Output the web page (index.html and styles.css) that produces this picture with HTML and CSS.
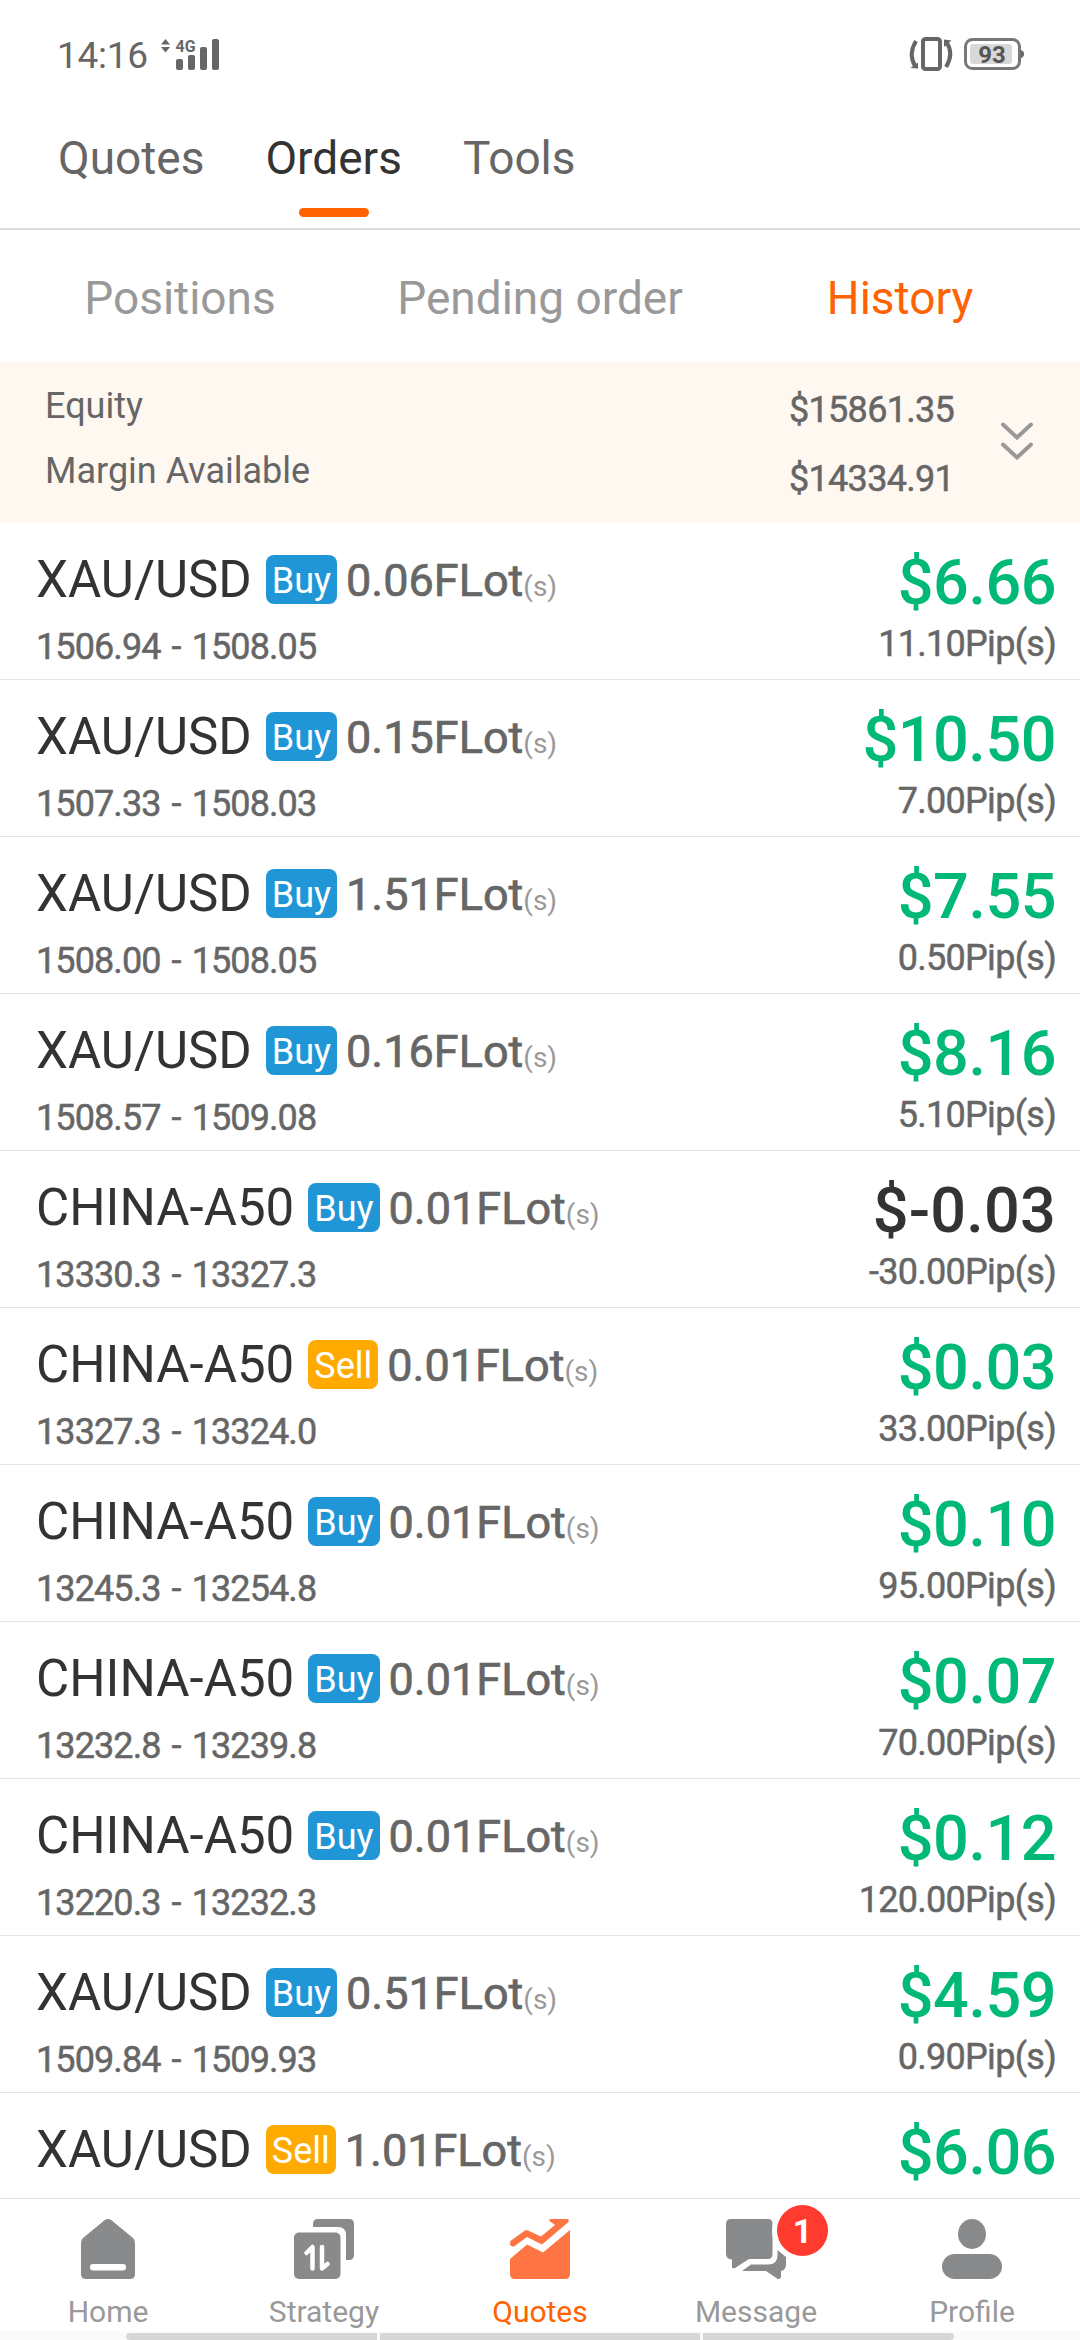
FILE: index.html
```
<!DOCTYPE html>
<html lang="en">
<head>
<meta charset="utf-8">
<title>Orders</title>
<link rel="stylesheet" href="styles.css">
</head>
<body>
<div class="screen">
  <header class="status">
    <span class="clock">14:16</span>
    <svg class="signal" width="60" height="36" viewBox="0 0 60 36"><path d="M1 5.500 5.500 0 10 5.500zM1 8 5.500 13.500 10 8z"/><text class="net" x="15.500" y="12.500" textLength="20" lengthAdjust="spacingAndGlyphs">4G</text><rect x="16" y="20" width="7" height="11" rx="2"/><rect x="28" y="16" width="7" height="15" rx="2"/><rect x="40" y="8" width="7" height="23" rx="2"/><rect x="52" y="0" width="7" height="31" rx="2"/></svg>
    <svg class="vibrate" width="44" height="36" viewBox="0 0 44 36"><rect x="14" y="3" width="17" height="30" rx="2.500" fill="none" stroke-width="4" stroke="#666"/><path d="M7 5Q-1 18 6 30M37 31Q45 18 38 7" fill="none" stroke="#666" stroke-width="4"/><path d="M1.500 32 9 26.500V32.500zM42.500 4.500 35 3.500V11z"/></svg>
    <svg class="battery" width="60" height="33" viewBox="0 0 60 33"><rect x="1.500" y="1.500" width="54" height="29" rx="7" fill="none" stroke="#777" stroke-width="3"/><rect x="6" y="6" width="42" height="20" rx="3" fill="#d8d8d8"/><path d="M57 12q3 1 3 4t-3 4z"/><text class="level" x="28" y="25" text-anchor="middle">93</text></svg>
  </header>
  <nav class="tabs"><a>Quotes</a><a class="on">Orders</a><a>Tools</a></nav>
  <nav class="subtabs"><a>Positions</a><a>Pending order</a><a class="on">History</a></nav>
  <section class="account">
    <div class="labels"><span>Equity</span><span>Margin Available</span></div>
    <div class="values"><span>$15861.35</span><span>$14334.91</span></div>
    <svg class="more" width="36" height="40" viewBox="0 0 36 40"><path d="M4 2.500 18 15.500 32 2.500M4 22.500 18 35.500 32 22.500"/></svg>
  </section>
  <main class="orders">
    <article class="order"><div class="head"><b class="name">XAU/USD</b><i class="side">Buy</i><span class="lot">0.06FLot<small>(s)</small></span></div><div class="price">1506.94 - 1508.05</div><div class="gain">$6.66</div><div class="pips">11.10Pip(s)</div></article>
    <article class="order"><div class="head"><b class="name">XAU/USD</b><i class="side">Buy</i><span class="lot">0.15FLot<small>(s)</small></span></div><div class="price">1507.33 - 1508.03</div><div class="gain">$10.50</div><div class="pips">7.00Pip(s)</div></article>
    <article class="order"><div class="head"><b class="name">XAU/USD</b><i class="side">Buy</i><span class="lot">1.51FLot<small>(s)</small></span></div><div class="price">1508.00 - 1508.05</div><div class="gain">$7.55</div><div class="pips">0.50Pip(s)</div></article>
    <article class="order"><div class="head"><b class="name">XAU/USD</b><i class="side">Buy</i><span class="lot">0.16FLot<small>(s)</small></span></div><div class="price">1508.57 - 1509.08</div><div class="gain">$8.16</div><div class="pips">5.10Pip(s)</div></article>
    <article class="order"><div class="head"><b class="name">CHINA-A50</b><i class="side">Buy</i><span class="lot">0.01FLot<small>(s)</small></span></div><div class="price">13330.3 - 13327.3</div><div class="gain loss">$-0.03</div><div class="pips">-30.00Pip(s)</div></article>
    <article class="order"><div class="head"><b class="name">CHINA-A50</b><i class="side sell">Sell</i><span class="lot">0.01FLot<small>(s)</small></span></div><div class="price">13327.3 - 13324.0</div><div class="gain">$0.03</div><div class="pips">33.00Pip(s)</div></article>
    <article class="order"><div class="head"><b class="name">CHINA-A50</b><i class="side">Buy</i><span class="lot">0.01FLot<small>(s)</small></span></div><div class="price">13245.3 - 13254.8</div><div class="gain">$0.10</div><div class="pips">95.00Pip(s)</div></article>
    <article class="order"><div class="head"><b class="name">CHINA-A50</b><i class="side">Buy</i><span class="lot">0.01FLot<small>(s)</small></span></div><div class="price">13232.8 - 13239.8</div><div class="gain">$0.07</div><div class="pips">70.00Pip(s)</div></article>
    <article class="order"><div class="head"><b class="name">CHINA-A50</b><i class="side">Buy</i><span class="lot">0.01FLot<small>(s)</small></span></div><div class="price">13220.3 - 13232.3</div><div class="gain">$0.12</div><div class="pips">120.00Pip(s)</div></article>
    <article class="order"><div class="head"><b class="name">XAU/USD</b><i class="side">Buy</i><span class="lot">0.51FLot<small>(s)</small></span></div><div class="price">1509.84 - 1509.93</div><div class="gain">$4.59</div><div class="pips">0.90Pip(s)</div></article>
    <article class="order"><div class="head"><b class="name">XAU/USD</b><i class="side sell">Sell</i><span class="lot">1.01FLot<small>(s)</small></span></div><div class="price"></div><div class="gain">$6.06</div></article>
  </main>
  <nav class="bottom">
    <a><svg width="60" height="60" viewBox="0 0 60 60"><path d="M26.500 1.200Q30-1.200 33.500 1.200L55 19Q57 21 57 24V55Q57 60 52 60H8Q3 60 3 55V24Q3 21 5 19z"/><rect x="12" y="45" width="36" height="6.500" rx="3" fill="#fff"/></svg>Home</a>
    <a><svg width="60" height="60" viewBox="0 0 60 60"><path d="M19 8V5Q19 0 24 0H55Q60 0 60 5V36Q60 41 55 41H52V16Q52 8 44 8z"/><rect y="13.500" width="46.500" height="46.500" rx="5"/><path d="M12.500 34 18.500 28V49.500M28 28V49.500L33.500 45" fill="none" stroke="#fff" stroke-width="4.500" stroke-linecap="round" stroke-linejoin="round"/></svg>Strategy</a>
    <a class="on"><svg width="60" height="60" viewBox="0 0 60 60"><path d="M0 40 17 25.500 33 33.500 60 11V55Q60 60 55 60H5Q0 60 0 55z"/><path d="M1 21.500 15 11.500Q16.500 10.500 18 11.500L31 17.500 45 6 39.500 2V0H58.500V3L32 25.500 17 18 4 27.500Q0 28 0 24.500 0 22 1 21.500z"/></svg>Quotes</a>
    <a><svg width="60" height="60" viewBox="0 0 60 60"><path d="M5 0H42Q46.500 0 46.500 5V35Q46.500 40 42 40H23L9 49Q6 50 6 48V40.500Q0 40 0 35V5Q0 0 5 0z"/><path d="M51.500 31 60 38V45Q60 51 55 52V58Q54 61 51 59.500L40 52H16L25 45.500H43Q51.500 45 51.500 36z"/></svg><em class="count">1</em>Message</a>
    <a><svg width="60" height="60" viewBox="0 0 60 60"><ellipse cx="30" cy="15" rx="14" ry="15"/><rect y="35" width="60" height="25" rx="12.500"/></svg>Profile</a>
  </nav>
  <div class="gesture"><span></span><span></span><span></span></div>
</div>
</body>
</html>
```
FILE: styles.css
```
* { box-sizing: border-box; }
body { margin: 0; background: #fff; font-family: Roboto, sans-serif; color: #666; }
.screen { width: 1080px; height: 2340px; display: flex; flex-direction: column; overflow: hidden; background: #fff; }
svg { fill: #666; display: block; flex: none; overflow: visible; }

.status { height: 108px; display: flex; align-items: flex-start; padding: 34px 56px 0 57px; }
.clock { font-size: 37px; line-height: 43px; width: 103px; letter-spacing: -.3px; }
.signal { margin-top: 5px; }
.net { font-size: 17px; font-weight: 700; }
.vibrate { margin: 2px 11px 0 auto; }
.battery { margin-top: 4px; }
.level { font-size: 24px; font-weight: 700; fill: #555; }

.tabs { height: 122px; display: flex; gap: 61px; padding: 24px 0 0 58px; border-bottom: 2px solid #dcdce2; font-size: 46px; line-height: 53px; }
.tabs a { display: flex; flex-direction: column; align-items: center; }
.tabs .on { color: #333; }
.tabs .on::after { content: ""; width: 70px; height: 9px; margin-top: 23px; border-radius: 5px; background: #ff6200; }

.subtabs { height: 132px; display: grid; grid-template-columns: repeat(3, 1fr); text-align: center; font-size: 46px; line-height: 137px; color: #999; }
.subtabs .on { color: #ff6200; }

.account { height: 161px; display: flex; background: #fff8f1; padding: 0 45px; font-size: 36px; }
.labels, .values { display: flex; flex-direction: column; gap: 21px; line-height: 44px; }
.labels { flex: 1; padding-top: 22px; }
.values { width: 210px; padding-top: 26px; gap: 25px; letter-spacing: -.7px; -webkit-text-stroke: .5px; }
.more { margin-top: 60px; }
.more path { fill: none; stroke: #999; stroke-width: 4; stroke-linecap: round; }

.orders { flex: 1; overflow: hidden; }
.order { height: 157px; border-bottom: 1px solid #e3e4e7; padding: 0 24px 0 36px; display: grid; grid-template-columns: 1fr auto; grid-template-rows: 96px 60px; grid-auto-flow: column; }
.head { display: flex; padding-top: 26px; }
.name { font-weight: 400; font-size: 51px; line-height: 62px; color: #333; margin-right: 14px; }
.side { font-style: normal; font-size: 36px; line-height: 53px; height: 49px; margin-top: 6px; padding: 0 6px; border-radius: 8px; background: #2196d6; color: #fff; }
.side.sell { background: #ffaa00; }
.lot { margin-left: 9px; font-size: 45px; line-height: 64px; -webkit-text-stroke: .7px; }
.lot small { font-size: 28px; color: #999; -webkit-text-stroke: 0; }
.price { font-size: 36px; line-height: 56px; letter-spacing: -.9px; word-spacing: 3px; -webkit-text-stroke: .5px; }
.gain { font-size: 63px; line-height: 76px; padding-top: 22px; text-align: right; font-weight: 500; letter-spacing: -.5px; color: #00b976; }
.loss { color: #333; letter-spacing: .2px; }
.pips { font-size: 36px; line-height: 50px; text-align: right; letter-spacing: -.7px; -webkit-text-stroke: .5px; }

.bottom { height: 133px; flex: none; border-top: 1px solid #e3e4e7; display: grid; grid-template-columns: repeat(5, 1fr); font-size: 30px; line-height: 36px; color: #999; }
.bottom a { position: relative; display: flex; flex-direction: column; align-items: center; gap: 15px; padding-top: 20px; }
.bottom svg { fill: #898a8c; }
.bottom .on { color: #ff6200; }
.bottom .on svg { fill: #ff7443; }
.count { position: absolute; left: 129px; top: 6px; width: 51px; height: 51px; border-radius: 50%; background: #ff3b30; box-shadow: 0 0 0 5px #fff; color: #fff; font: 700 34px/52px Roboto, sans-serif; text-align: center; }
.gesture { height: 9px; flex: none; background: #fafafa; display: flex; gap: 3px; padding: 2px 126px 0; }
.gesture span { height: 7px; flex: 1 1 251px; background: #d5d6d5; }
.gesture span:nth-child(2) { flex-basis: 320px; }
.gesture span:first-child { border-radius: 4px 0 0 4px; }
.gesture span:last-child { border-radius: 0 4px 4px 0; }
```
